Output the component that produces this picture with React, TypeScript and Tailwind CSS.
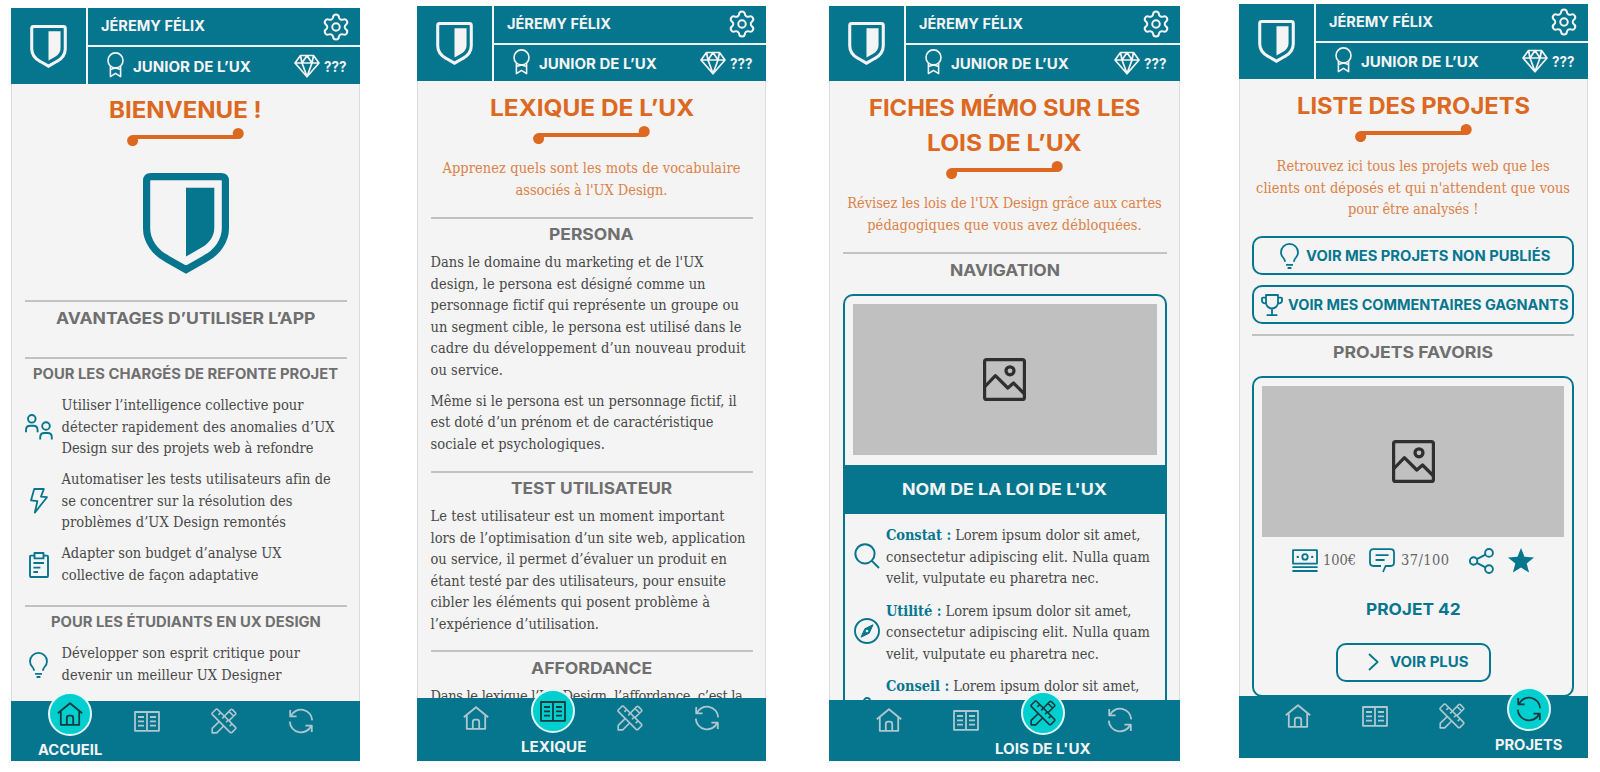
import { useLayoutEffect, useRef, type ReactNode } from "react";
import { Settings } from "lucide-react";

/** A single line of body text whose tracking is adjusted so that it spans `w` pixels. */
function Line({ w, children }: { w: number; children: ReactNode }) {
  const ref = useRef<HTMLSpanElement>(null);
  useLayoutEffect(() => {
    const el = ref.current;
    if (!el) return;
    el.style.letterSpacing = "0px";
    const count = (el.textContent || "").length;
    const natural = el.getBoundingClientRect().width;
    el.style.letterSpacing = `${(w - natural) / Math.max(1, count - 1)}px`;
  }, [w]);
  return (
    <span className="block">
      <span ref={ref} className="inline-block whitespace-nowrap">
        {children}
      </span>
    </span>
  );
}

/** A line of display text, extended horizontally so that its glyphs span `w` pixels. */
function Wide({ w, children }: { w: number; children: ReactNode }) {
  const ref = useRef<HTMLSpanElement>(null);
  useLayoutEffect(() => {
    const el = ref.current;
    if (!el) return;
    el.style.transform = `translateX(-1px) scaleX(${(w + 2) / el.offsetWidth})`;
  }, [w]);
  return (
    <span className="mx-auto block text-left" style={{ width: w }}>
      <span ref={ref} className="inline-block origin-left whitespace-nowrap">
        {children}
      </span>
    </span>
  );
}

type Row = [string, number];
const rows = (list: Row[]) =>
  list.map(([text, w]) => (
    <Line key={text} w={w}>
      {text}
    </Line>
  ));

function Shield({ className }: { className: string }) {
  return (
    <svg viewBox="0 0 86 101" className={className} fill="none">
      <path
        d="M8 3.6H78Q82.4 3.6 82.4 8V55.6C82.4 68 74 79.5 62 85.8L43 96.6L24 85.8C12 79.5 3.6 68 3.6 55.6V8Q3.6 3.6 8 3.6Z"
        stroke="currentColor"
        strokeWidth="7.2"
      />
      <path d="M43 14.7H71.3V55C71.3 63.5 66 70.4 58.6 74.6L43 83.6Z" fill="currentColor" />
    </svg>
  );
}

function Icon({ w, h, sw = 1.8, children }: { w: number; h: number; sw?: number; children: ReactNode }) {
  return (
    <svg
      width={w}
      height={h}
      viewBox={`0 0 ${w} ${h}`}
      fill="none"
      stroke="currentColor"
      strokeWidth={sw}
      strokeLinejoin="round"
      className="shrink-0"
    >
      {children}
    </svg>
  );
}

const Ribbon = () => (
  <Icon w={17} h={26} sw={1.6}>
    <circle cx="8.5" cy="8.4" r="7.5" />
    <path d="M3.4 14V24.6L8.5 21.4L13.6 24.6V14M3.4 17.4L8.5 15.9L13.6 17.4" />
  </Icon>
);
const Diamond = () => (
  <Icon w={26} h={24} sw={1.7}>
    <path d="M6.5 1.5H19.5L25 9L13 22.8L1 9ZM1 9H25M13 1.5L8 9L13 22.5L18 9ZM6.5 1.5L8 9M19.5 1.5L18 9" />
  </Icon>
);
const Home = () => (
  <Icon w={26} h={24}>
    <path d="M.8 11.2L13 1.2L25.2 11.2M3.8 9V22.8H22.2V9M9.8 22.8V16Q9.8 13.6 12 13.6H14Q16.2 13.6 16.2 16V22.8" />
  </Icon>
);
const Book = () => (
  <Icon w={26} h={21}>
    <path d="M1 1H25V19.8H1ZM13 1V19.8M4 6H10M4 10.3H10M4 14.6H10M16 6H22M16 10.3H22M16 14.6H22" />
  </Icon>
);
const Tools = () => (
  <Icon w={26} h={26} sw={1.6}>
    <path d="M5 1.2L1.2 5Q.8 5.8 1.2 6.4L19.4 24.6Q20 25 20.8 24.6L24.6 20.8Q25 20 24.6 19.4L6.4 1.2Q5.8.8 5 1.2Z" />
    <path d="M9.5 4.8L7.4 6.9M13.2 8.4L11.2 10.4M17 12.2L15 14.2M20.8 16L18.7 18.1" />
    <path d="M8.4 13.4L1.2 20.4V24.9H5.7L12.9 17.8M13.2 8.3L19.8 1.6Q20.6 1 21.4 1.6L24.5 4.7Q25.1 5.5 24.5 6.3L17.8 12.9M18 3.4L22.6 8" />
  </Icon>
);
const Refresh = () => (
  <Icon w={26} h={26}>
    <path d="M2.8 8.2A11.2 11.2 0 0 1 24.2 12.4M2.2 2V8.4H8.6M23.2 17.8A11.2 11.2 0 0 1 1.8 13.6M23.8 24V17.6H17.4" />
  </Icon>
);
const Users = () => (
  <Icon w={28} h={26} sw={1.9}>
    <circle cx="6.8" cy="4.8" r="3.8" />
    <path d="M1 18.2V16.2Q1 11.8 5.2 11.8H8.4Q12.6 11.8 12.6 16.2V18.2" />
    <circle cx="21" cy="12" r="3.8" />
    <path d="M15.2 25.4V23.4Q15.2 19 19.4 19H22.6Q26.8 19 26.8 23.4V25.4" />
  </Icon>
);
const Bolt = () => (
  <Icon w={18} h={26}>
    <path d="M4.2 1H13.8L11 8.6L17 9.2L4.8 24.6L7.4 13.2L1 12.4Z" />
  </Icon>
);
const Clipboard = () => (
  <Icon w={20} h={26} sw={1.9}>
    <path d="M5.5 3.6H2Q1 3.6 1 4.6V24Q1 25 2 25H18Q19 25 19 24V4.6Q19 3.6 18 3.6H14.5M5.5 1H14.5V6.4H5.5ZM4.4 11H15M4.4 15.6H11.4M4.4 20H9" />
  </Icon>
);
const Bulb = () => (
  <Icon w={19} h={26}>
    <path d="M5 18.8Q5 16.8 3.4 15Q1 12.4 1 9.2A8.5 8.3 0 0 1 18 9.2Q18 12.4 15.6 15Q14 16.8 14 18.8M6 21.8H13M7.6 25H11.4" />
  </Icon>
);
const Trophy = () => (
  <Icon w={22} h={22}>
    <path d="M5 1H17V8.5A6 6 0 0 1 5 8.5ZM5 3.6H2Q.9 3.6.9 4.8V6Q.9 9.4 5 9.6M17 3.6H20Q21.1 3.6 21.1 4.8V6Q21.1 9.4 17 9.6M11 14.6V21M5.6 21.1H16.4" />
  </Icon>
);
const Search = () => (
  <Icon w={26} h={26} sw={2}>
    <circle cx="11" cy="10.8" r="9.6" />
    <path d="M17.6 17.6L25 25" />
  </Icon>
);
const Compass = () => (
  <Icon w={26} h={26} sw={1.9}>
    <circle cx="13" cy="13" r="12" />
    <path d="M19 6.8L15.2 15.2L7 19.2L10.8 10.8Z" fill="currentColor" strokeWidth="1" />
    <circle cx="13" cy="13" r="1.3" fill="#f4f4f4" stroke="none" />
  </Icon>
);
const Person = () => (
  <Icon w={26} h={26} sw={1.9}>
    <circle cx="13" cy="7" r="3" />
    <path d="M6 25V18Q6 13 13 13Q20 13 20 18V25" />
  </Icon>
);
const Money = () => (
  <Icon w={26} h={24}>
    <path d="M1 1.2H25V14.6H1ZM.4 18.2H25.6M.4 22H25.6" />
    <circle cx="13" cy="7.9" r="2.7" />
    <circle cx="5.8" cy="7.9" r="1.2" fill="currentColor" stroke="none" />
    <circle cx="20.2" cy="7.9" r="1.2" fill="currentColor" stroke="none" />
  </Icon>
);
const Comment = () => (
  <Icon w={26} h={25}>
    <path d="M14 24L16.6 18H21.6Q25 18 25 14.6V4.6Q25 1.2 21.6 1.2H4.4Q1 1.2 1 4.6V14.6Q1 18 4.4 18H12M6.6 7.2H19.6M6.6 12H15.6" />
  </Icon>
);
const Share = () => (
  <Icon w={25} h={26} sw={1.9}>
    <circle cx="4.6" cy="13" r="3.7" />
    <circle cx="20" cy="4.9" r="3.9" />
    <circle cx="20" cy="21.1" r="3.9" />
    <path d="M7.8 11.2L16.5 6.6M7.8 14.8L16.5 19.4" />
  </Icon>
);
const Star = () => (
  <Icon w={26} h={25} sw={0}>
    <path
      d="M13 0L16.5 8.8L26 9.4L18.7 15.4L21.1 24.6L13 19.5L4.9 24.6L7.3 15.4L0 9.4L9.5 8.8Z"
      fill="currentColor"
    />
  </Icon>
);
const Chevron = () => (
  <Icon w={11} h={18}>
    <path d="M1 1L9.6 9L1 17" />
  </Icon>
);

function Placeholder() {
  return (
    <div className="mx-2 mt-2 flex h-[151px] shrink-0 items-center justify-center bg-[#c0c0c0] text-[#2f2f2f]">
      <Icon w={43} h={43} sw={3.2}>
        <rect x="1.6" y="1.6" width="39.8" height="39.8" rx="2" />
        <circle cx="27" cy="12.8" r="4" />
        <path d="M2 28.5L12.4 17.6L24.8 30L30.5 25L41 35.5" />
      </Icon>
    </div>
  );
}

function Header({ className }: { className: string }) {
  return (
    <header
      className={`grid shrink-0 grid-cols-[75px_1fr] grid-rows-2 gap-[2px] bg-[#f4f4f4] font-['Inter',sans-serif] text-[14px] leading-5 font-bold text-[#f4f4f4] ${className}`}
    >
      <div className="row-span-2 flex items-center justify-center bg-[#06768f]">
        <Shield className="h-[43px] w-[37px]" />
      </div>
      <div className="flex items-center justify-between bg-[#06768f] pr-[9px] pl-[14px]">
        <div className="pb-px">
          <Wide w={102}>JÉREMY FÉLIX</Wide>
        </div>
        <Settings size={30} strokeWidth={1.6} />
      </div>
      <div className="flex items-center bg-[#06768f] pr-[14px] pl-[19px]">
        <div className="pb-[2px]">
          <Ribbon />
        </div>
        <div className="mr-auto ml-[10px] pt-[2px]">
          <Wide w={116}>JUNIOR DE L’UX</Wide>
        </div>
        <Diamond />
        <div className="ml-[5px] pt-[2px]">
          <Wide w={21}>???</Wide>
        </div>
      </div>
    </header>
  );
}

function Title({ lines }: { lines: Row[] }) {
  return (
    <>
      <h1 className="text-center font-['Inter',sans-serif] text-[22.5px] leading-[35px] font-bold text-[#dd681f]">
        {lines.map(([text, w]) => (
          <Wide key={text} w={w}>
            {text}
          </Wide>
        ))}
      </h1>
      <svg width="117" height="18" viewBox="0 0 117 18" fill="#dd681f" className="mx-auto mt-px shrink-0">
        <circle cx="5.6" cy="12.6" r="5.5" />
        <circle cx="111.2" cy="5.5" r="5.5" />
        <path d="M5.6 7.1H111.2V11H5.6Z" />
      </svg>
    </>
  );
}

const Intro = ({ lines }: { lines: Row[] }) => (
  <p className="mt-[14px] text-center text-[#dc8248]">{rows(lines)}</p>
);

const Rule = ({ className }: { className: string }) => (
  <div className={`h-[2px] shrink-0 bg-[#c2c2c2] ${className}`} />
);

function Heading({ text, w, small, className = "mt-[4px]" }: { text: string; w: number; small?: boolean; className?: string }) {
  return (
    <h2
      className={`text-center font-['Inter',sans-serif] leading-6 font-bold text-[#6f6f6f] ${small ? "text-[14px]" : "text-[16px]"} ${className}`}
    >
      <Wide w={w}>{text}</Wide>
    </h2>
  );
}

function Item({ icon, iconClass = "mr-[9px]", children }: { icon: ReactNode; iconClass?: string; children: ReactNode }) {
  return (
    <li className="flex items-center">
      <span className={`flex w-7 shrink-0 justify-center text-[#06768f] ${iconClass}`}>{icon}</span>
      <div>{children}</div>
    </li>
  );
}

const tabs = [
  { label: "ACCUEIL", w: 62, icon: <Home /> },
  { label: "LEXIQUE", w: 63, icon: <Book /> },
  { label: "LOIS DE L'UX", w: 94, icon: <Tools /> },
  { label: "PROJETS", w: 65, icon: <Refresh /> },
];

function Nav({ active, className }: { active: number; className: string }) {
  return (
    <nav className={`relative grid shrink-0 grid-cols-[repeat(4,77px)] justify-center bg-[#06768f] ${className}`}>
      {tabs.map((tab, i) =>
        i === active ? (
          <div key={tab.label} className="-mt-[9px] flex flex-col items-center">
            <div className="flex size-11 shrink-0 items-center justify-center rounded-full border-2 border-[#e4f6f6] bg-[#00cfd0] text-[#17393d]">
              {tab.icon}
            </div>
            <div className="mt-1 flex w-[110px] justify-center font-['Inter',sans-serif] text-[14px] leading-5 font-bold text-[#f4f4f4]">
              <Wide w={tab.w}>{tab.label}</Wide>
            </div>
          </div>
        ) : (
          <div key={tab.label} className="flex h-10 items-center justify-center text-[#afc7ce]">
            {tab.icon}
          </div>
        ),
      )}
    </nav>
  );
}

function Phone({
  className,
  header,
  nav,
  active,
  children,
}: {
  className: string;
  header: string;
  nav: string;
  active: number;
  children: ReactNode;
}) {
  return (
    <section className={`flex shrink-0 flex-col ${className}`}>
      <Header className={header} />
      <div className="flex min-h-0 flex-1 flex-col overflow-hidden border-x border-[#dcdcdc] bg-[#f4f4f4] px-[12.5px] font-['DejaVu_Serif_Condensed','DejaVu_Serif',serif] text-[14.5px] leading-[21.5px] text-[#484848]">
        {children}
      </div>
      <Nav active={active} className={nav} />
    </section>
  );
}

const Button = ({ className, icon, text, w }: { className: string; icon: ReactNode; text: string; w: number }) => (
  <button
    type="button"
    className={`flex h-[39px] shrink-0 items-center rounded-[10px] border-2 border-[#06768f] font-['Inter',sans-serif] text-[14px] font-bold text-[#06768f] ${className}`}
  >
    {icon}
    <span>
      <Wide w={w}>{text}</Wide>
    </span>
  </button>
);

const Law = ({ icon, name, w }: { icon: ReactNode; name: string; w: number }) => (
  <Item icon={icon} iconClass="ml-1 mr-[5px] pb-[2px]">
    <Line w={w}>
      <b className="text-[#06768f]">{name} :</b> Lorem ipsum dolor sit amet,
    </Line>
    <Line w={264}>consectetur adipiscing elit. Nulla quam</Line>
    <Line w={213}>velit, vulputate eu pharetra nec.</Line>
  </Item>
);

export default function App() {
  return (
    <main className="flex h-[772px] w-[1600px] items-start overflow-hidden bg-white">
      <Phone className="mt-2 ml-[11px] h-[753px] w-[349px]" header="h-[76px]" nav="h-[60px]" active={0}>
        <div className="h-2 shrink-0" />
        <Title lines={[["BIENVENUE !", 151]]} />
        <Shield className="mx-auto mt-[27px] h-[101px] w-[86px] shrink-0 text-[#06768f]" />
        <Rule className="mt-[26px]" />
        <Heading text="AVANTAGES D’UTILISER L’APP" w={258} />
        <Rule className="mt-[27px]" />
        <Heading text="POUR LES CHARGÉS DE REFONTE PROJET" w={303} small className="mt-[3px]" />
        <ul className="mt-[9px] flex flex-col gap-[9.7px]">
          <Item icon={<Users />}>
            {rows([
              ["Utiliser l’intelligence collective pour", 242],
              ["détecter rapidement des anomalies d’UX", 273],
              ["Design sur des projets web à refondre", 252],
            ])}
          </Item>
          <Item icon={<Bolt />}>
            {rows([
              ["Automatiser les tests utilisateurs afin de", 269],
              ["se concentrer sur la résolution des", 231],
              ["problèmes d’UX Design remontés", 224.5],
            ])}
          </Item>
          <Item icon={<Clipboard />}>
            {rows([
              ["Adapter son budget d’analyse UX", 220],
              ["collective de façon adaptative", 197],
            ])}
          </Item>
        </ul>
        <Rule className="mt-[19px]" />
        <Heading text="POUR LES ÉTUDIANTS EN UX DESIGN" w={268} small className="mt-[3px]" />
        <ul className="mt-[9px]">
          <Item icon={<Bulb />}>
            {rows([
              ["Développer son esprit critique pour", 238.5],
              ["devenir un meilleur UX Designer", 220],
            ])}
          </Item>
        </ul>
      </Phone>

      <Phone className="mt-[6px] ml-[57px] h-[755px] w-[349px]" header="h-[75px]" nav="h-[63px]" active={1}>
        <div className="h-[9px] shrink-0" />
        <Title lines={[["LEXIQUE DE L’UX", 202]]} />
        <Intro
          lines={[
            ["Apprenez quels sont les mots de vocabulaire", 298],
            ["associés à l'UX Design.", 152],
          ]}
        />
        <Rule className="mt-4" />
        <Heading text="PERSONA" w={83} className="mt-[3px]" />
        <div className="mt-[6px]">
          {rows([
            ["Dans le domaine du marketing et de l'UX", 273],
            ["design, le persona est désigné comme un", 275],
            ["personnage fictif qui représente un groupe ou", 308],
            ["un segment cible, le persona est utilisé dans le", 311],
            ["cadre du développement d’un nouveau produit", 315],
            ["ou service.", 72.5],
          ])}
        </div>
        <div className="mt-[9.5px]">
          {rows([
            ["Même si le persona est un personnage fictif, il", 306],
            ["est doté d’un prénom et de caractéristique", 283],
            ["sociale et psychologiques.", 174.5],
          ])}
        </div>
        <Rule className="mt-4" />
        <Heading text="TEST UTILISATEUR" w={159} className="mt-[3px]" />
        <div className="mt-[6px]">
          {rows([
            ["Le test utilisateur est un moment important", 294],
            ["lors de l’optimisation d’un site web, application", 315],
            ["ou service, il permet d’évaluer un produit en", 296.5],
            ["étant testé par des utilisateurs, pour ensuite", 295.5],
            ["cibler les éléments qui posent problème à", 279.5],
            ["l’expérience d’utilisation.", 168.5],
          ])}
        </div>
        <Rule className="mt-[15px]" />
        <Heading text="AFFORDANCE" w={119} />
        <div className="mt-[6px]">{rows([["Dans le lexique l’UX Design, l’affordance, c’est la", 312]])}</div>
      </Phone>

      <Phone className="mt-[6px] ml-[63px] h-[755px] w-[351px]" header="h-[75px]" nav="h-[61px]" active={2}>
        <div className="h-[9px] shrink-0" />
        <Title
          lines={[
            ["FICHES MÉMO SUR LES", 269],
            ["LOIS DE L’UX", 153],
          ]}
        />
        <Intro
          lines={[
            ["Révisez les lois de l'UX Design grâce aux cartes", 314.5],
            ["pédagogiques que vous avez débloquées.", 274.5],
          ]}
        />
        <Rule className="mt-4" />
        <Heading text="NAVIGATION" w={108} />
        <div className="mt-3 flex shrink-0 flex-col rounded-t-[10px] border-[2px] border-b-0 border-[#06768f]">
          <Placeholder />
          <h3 className="mt-[10px] flex h-[49px] items-center justify-center bg-[#06768f] pt-px font-['Inter',sans-serif] text-[16px] font-bold text-[#f4f4f4]">
            <Wide w={203}>NOM DE LA LOI DE L'UX</Wide>
          </h3>
          <ul className="mt-[10px] ml-1 flex flex-col gap-[10.2px] pl-[0.5px]">
            <Law icon={<Search />} name="Constat" w={254.5} />
            <Law icon={<Compass />} name="Utilité" w={245.5} />
            <Law icon={<Person />} name="Conseil" w={253.5} />
          </ul>
        </div>
      </Phone>

      <Phone className="mt-1 ml-[58.6px] h-[754px] w-[349px]" header="h-[75px]" nav="h-[62px]" active={3}>
        <div className="h-[9px] shrink-0" />
        <Title lines={[["LISTE DES PROJETS", 231]]} />
        <Intro
          lines={[
            ["Retrouvez ici tous les projets web que les", 273],
            ["clients ont déposés et qui n'attendent que vous", 314],
            ["pour être analysés !", 130.5],
          ]}
        />
        <Button className="mt-[15.5px] gap-[8px] pl-[26px]" icon={<Bulb />} text="VOIR MES PROJETS NON PUBLIÉS" w={242} />
        <Button className="mt-[10px] gap-[6px] pl-[7px]" icon={<Trophy />} text="VOIR MES COMMENTAIRES GAGNANTS" w={278.5} />
        <Rule className="mt-[10px]" />
        <Heading text="PROJETS FAVORIS" w={158} className="mt-[3.5px]" />
        <div className="mt-3 flex h-[321px] shrink-0 flex-col rounded-[10px] border-[2px] border-[#06768f]">
          <Placeholder />
          <div className="mt-[11px] flex h-[26px] items-center pl-[38px] text-[#06768f]">
            <Money />
            <div className="mr-[13px] ml-[5px] text-[#666]">
              <Line w={33}>100€</Line>
            </div>
            <Comment />
            <div className="mr-5 ml-[6px] text-[#666]">
              <Line w={48}>37/100</Line>
            </div>
            <Share />
            <span className="ml-[14px]">
              <Star />
            </span>
          </div>
          <h3 className="mt-[23px] text-center font-['Inter',sans-serif] text-[16px] leading-6 font-bold text-[#06768f]">
            <Wide w={93}>PROJET 42</Wide>
          </h3>
          <Button
            className="mx-auto mt-[22px] w-[155px] gap-[12px] pl-[30px]"
            icon={<Chevron />}
            text="VOIR PLUS"
            w={77}
          />
        </div>
      </Phone>
    </main>
  );
}
